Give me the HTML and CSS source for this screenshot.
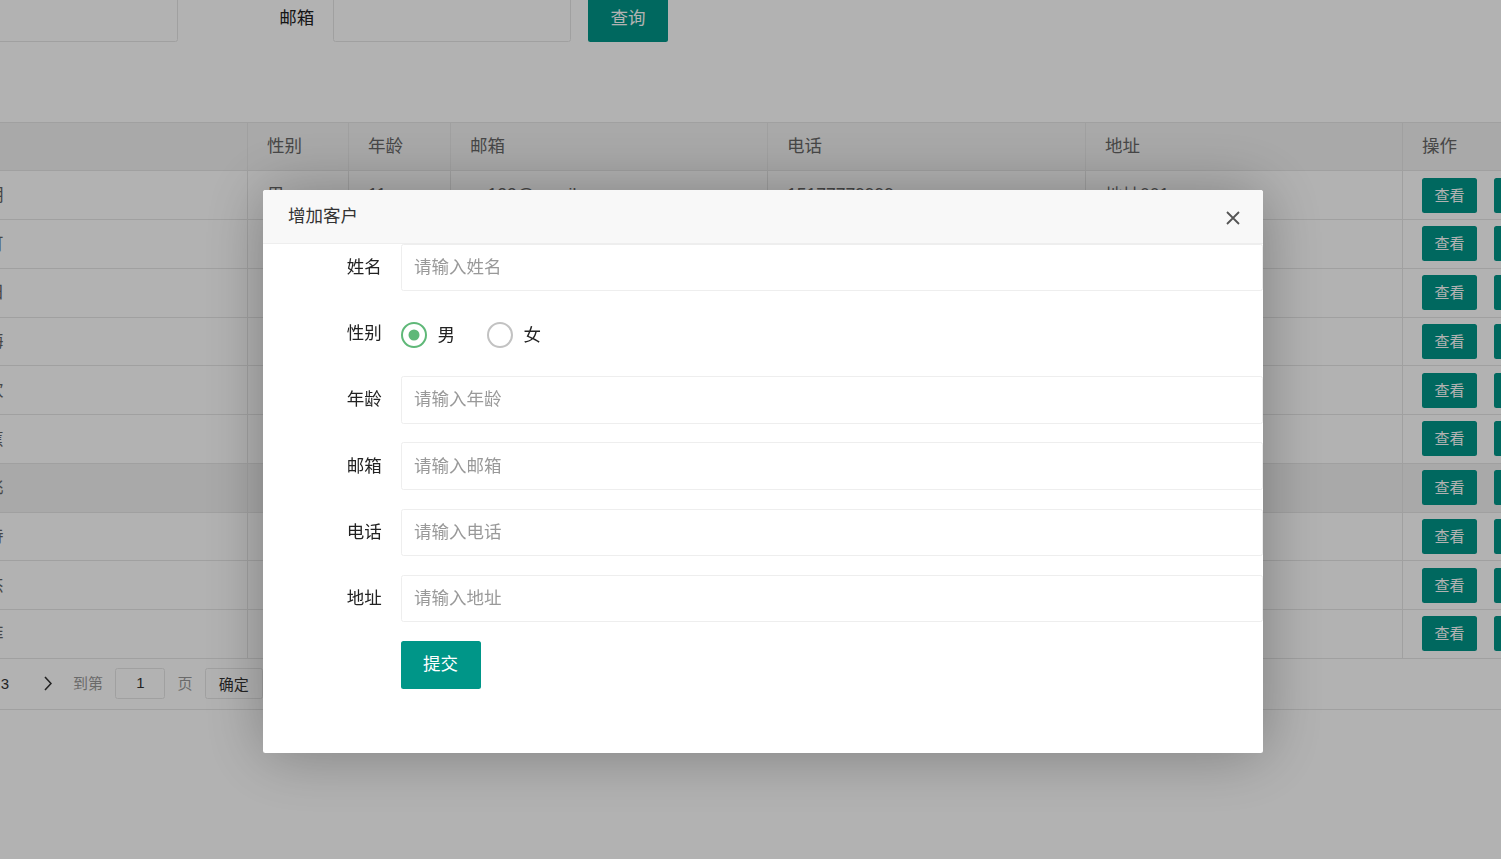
FILE: index.html
```html
<!DOCTYPE html>
<html lang="zh-CN">
<head>
  <meta charset="UTF-8">
  <meta name="viewport" content="width=device-width, initial-scale=1.0">
  <title>客户管理</title>
  <link rel="stylesheet" href="styles.css">
</head>
<body>
  <div class="page">
    <form class="search-bar">
      <label class="search-label">姓名</label>
      <input type="text" class="search-input">
      <label class="search-label">邮箱</label>
      <input type="text" class="search-input">
      <button type="button" class="btn">查询</button>
    </form>

    <div class="table-box">
      <table class="data-table">
        <colgroup>
          <col style="width: 128px">
          <col style="width: 316px">
          <col style="width: 101px">
          <col style="width: 102px">
          <col style="width: 317px">
          <col style="width: 318px">
          <col style="width: 317px">
          <col style="width: 200px">
        </colgroup>
        <thead>
          <tr>
            <th>ID</th>
            <th>姓名</th>
            <th>性别</th>
            <th>年龄</th>
            <th>邮箱</th>
            <th>电话</th>
            <th>地址</th>
            <th>操作</th>
          </tr>
        </thead>
        <tbody>
          <tr><td>1</td><td>李小明</td><td>男</td><td>11</td><td>zs123@email.com</td><td>15177779999</td><td>地址001</td><td><div class="ops"><a class="btn btn-sm">查看</a><a class="btn btn-sm">修改</a></div></td></tr>
          <tr><td>2</td><td>王可可</td><td>女</td><td>22</td><td>wk456@email.com</td><td>15177778888</td><td>地址002</td><td><div class="ops"><a class="btn btn-sm">查看</a><a class="btn btn-sm">修改</a></div></td></tr>
          <tr><td>3</td><td>张一旧</td><td>男</td><td>33</td><td>zj789@email.com</td><td>15177776666</td><td>地址003</td><td><div class="ops"><a class="btn btn-sm">查看</a><a class="btn btn-sm">修改</a></div></td></tr>
          <tr><td>4</td><td>赵雪梅</td><td>女</td><td>24</td><td>zm321@email.com</td><td>15177775555</td><td>地址004</td><td><div class="ops"><a class="btn btn-sm">查看</a><a class="btn btn-sm">修改</a></div></td></tr>
          <tr><td>5</td><td>刘小欢</td><td>男</td><td>35</td><td>lh654@email.com</td><td>15177774444</td><td>地址005</td><td><div class="ops"><a class="btn btn-sm">查看</a><a class="btn btn-sm">修改</a></div></td></tr>
          <tr><td>6</td><td>陈美蕉</td><td>女</td><td>26</td><td>cj987@email.com</td><td>15177773333</td><td>地址006</td><td><div class="ops"><a class="btn btn-sm">查看</a><a class="btn btn-sm">修改</a></div></td></tr>
          <tr class="hover"><td>7</td><td>杨一飞</td><td>男</td><td>37</td><td>yf111@email.com</td><td>15177772222</td><td>地址007</td><td><div class="ops"><a class="btn btn-sm">查看</a><a class="btn btn-sm">修改</a></div></td></tr>
          <tr><td>8</td><td>黄诗诗</td><td>女</td><td>28</td><td>hs222@email.com</td><td>15177771111</td><td>地址008</td><td><div class="ops"><a class="btn btn-sm">查看</a><a class="btn btn-sm">修改</a></div></td></tr>
          <tr><td>9</td><td>周小杰</td><td>男</td><td>39</td><td>zj333@email.com</td><td>15177770000</td><td>地址009</td><td><div class="ops"><a class="btn btn-sm">查看</a><a class="btn btn-sm">修改</a></div></td></tr>
          <tr><td>10</td><td>吴菲菲</td><td>女</td><td>20</td><td>wf444@email.com</td><td>15177779090</td><td>地址010</td><td><div class="ops"><a class="btn btn-sm">查看</a><a class="btn btn-sm">修改</a></div></td></tr>
        </tbody>
      </table>

      <div class="pager">
        <span class="pg-item">
          <svg width="8" height="15" viewBox="0 0 8 15"><polyline points="7,1 1,7.5 7,14" fill="none" stroke="#333" stroke-width="1.6"/></svg>
        </span>
        <span class="pg-item">1</span>
        <span class="pg-item">2</span>
        <span class="pg-item">3</span>
        <span class="pg-next">
          <svg width="8" height="15" viewBox="0 0 8 15"><polyline points="1,1 7,7.5 1,14" fill="none" stroke="#333" stroke-width="1.6"/></svg>
        </span>
        <span class="pg-text">到第</span>
        <input type="text" class="pg-input" value="1">
        <span class="pg-text pg-unit">页</span>
        <button type="button" class="pg-btn">确定</button>
      </div>
    </div>
  </div>

  <div class="shade"></div>

  <div class="layer">
    <div class="layer-title">
      增加客户
      <svg class="layer-close" width="14" height="14" viewBox="0 0 14 14">
        <path d="M1 1 L13 13 M13 1 L1 13" stroke="#555" stroke-width="1.8"/>
      </svg>
    </div>
    <form class="layer-form">
      <div class="form-item">
        <label class="form-label">姓名</label>
        <div class="form-block"><input type="text" class="form-input" placeholder="请输入姓名"></div>
      </div>
      <div class="form-item">
        <label class="form-label">性别</label>
        <div class="form-block">
          <div class="radio-group">
            <span class="radio">
              <svg width="26" height="26" viewBox="0 0 26 26"><circle cx="13" cy="13" r="12" fill="none" stroke="#5fb878" stroke-width="2"/><circle cx="13" cy="13" r="5.5" fill="#5fb878"/></svg>
              男
            </span>
            <span class="radio">
              <svg width="26" height="26" viewBox="0 0 26 26"><circle cx="13" cy="13" r="12" fill="none" stroke="#c2c2c2" stroke-width="2"/></svg>
              女
            </span>
          </div>
        </div>
      </div>
      <div class="form-item">
        <label class="form-label">年龄</label>
        <div class="form-block"><input type="text" class="form-input" placeholder="请输入年龄"></div>
      </div>
      <div class="form-item">
        <label class="form-label">邮箱</label>
        <div class="form-block"><input type="text" class="form-input" placeholder="请输入邮箱"></div>
      </div>
      <div class="form-item">
        <label class="form-label">电话</label>
        <div class="form-block"><input type="text" class="form-input" placeholder="请输入电话"></div>
      </div>
      <div class="form-item">
        <label class="form-label">地址</label>
        <div class="form-block"><input type="text" class="form-input" placeholder="请输入地址"></div>
      </div>
      <div class="form-item">
        <div class="form-block form-offset"><button type="button" class="btn">提交</button></div>
      </div>
    </form>
  </div>
</body>
</html>
```

FILE: styles.css
```css
* {
  box-sizing: border-box;
}

body {
  margin: 0;
  overflow: hidden;
  background: #fff;
  color: #333;
  font: 17.5px/1.4 "Liberation Sans", "Noto Sans CJK SC", sans-serif;
}

/* page behind the shade, scrolled a little right and down */
.page {
  width: 1900px;
  margin: -5.5px 0 0 -197px;
}

.search-bar {
  display: flex;
  align-items: center;
  height: 47.5px;
}

.search-label {
  width: 137.5px;
  padding-right: 18.75px;
  text-align: right;
  color: #222;
}

.search-input {
  width: 237.5px;
  height: 47.5px;
  margin-right: 17.5px;
  border: 1px solid #e6e6e6;
  border-radius: 2.5px;
}

.btn {
  display: inline-block;
  height: 47.5px;
  padding: 0 22.5px;
  border: none;
  border-radius: 2.5px;
  background: #009688;
  color: #fff;
  font: inherit;
  line-height: 47.5px;
  white-space: nowrap;
}

.table-box {
  margin-top: 79.5px;
}

.data-table {
  width: 1799px;
  table-layout: fixed;
  border-collapse: collapse;
  color: #666;
}

.data-table th,
.data-table td {
  height: 48.75px;
  padding: 0 19px;
  border: 1px solid #e6e6e6;
  text-align: left;
  font-weight: normal;
  white-space: nowrap;
  overflow: hidden;
}

.data-table thead tr,
.data-table tr.hover {
  background: #f2f2f2;
}

.ops {
  display: flex;
  gap: 17px;
}

.btn-sm {
  height: 35px;
  padding: 0 12.5px;
  font-size: 15px;
  line-height: 35px;
}

/* pagination */
.pager {
  display: flex;
  align-items: flex-start;
  height: 51.25px;
  padding: 8.75px 0 0 35.6px;
  border-bottom: 1px solid #e6e6e6;
  font-size: 15px;
  line-height: 32.5px;
  color: #333;
}

.pg-item {
  display: flex;
  align-items: center;
  justify-content: center;
  width: 47.5px;
  height: 32.5px;
}

.pg-next {
  display: flex;
  align-items: center;
  height: 32.5px;
  padding: 0 15.4px;
}

.pg-text {
  margin-left: 5.6px;
  color: #999;
}

.pg-input {
  width: 50px;
  height: 31.5px;
  margin: 0 12px 0 12.5px;
  border: 1px solid #e6e6e6;
  border-radius: 2.5px;
  color: #333;
  font: inherit;
  text-align: center;
}

.pg-unit {
  margin: 0 12.5px 0 0;
}

.pg-btn {
  width: 57.5px;
  height: 31.5px;
  padding: 0;
  border: 1px solid #e6e6e6;
  border-radius: 2.5px;
  background: #fff;
  color: #333;
  font: inherit;
}

/* modal */
.shade {
  position: fixed;
  top: 0;
  right: 0;
  bottom: 0;
  left: 0;
  background: rgba(0, 0, 0, 0.3);
}

.layer {
  position: fixed;
  left: 263px;
  top: 190px;
  width: 1000px;
  height: 563px;
  border-radius: 2.5px;
  background: #fff;
  box-shadow: 1px 1px 62px rgba(0, 0, 0, 0.3);
}

.layer-title {
  position: relative;
  height: 53.5px;
  padding-left: 25px;
  border-bottom: 1px solid #eee;
  border-radius: 2.5px 2.5px 0 0;
  background: #f8f8f8;
  color: #333;
  line-height: 52.5px;
}

.layer-close {
  position: absolute;
  top: 21px;
  right: 23px;
}

.form-item {
  display: flex;
  margin-bottom: 18.75px;
}

.form-label {
  flex-shrink: 0;
  width: 137.5px;
  padding: 11.25px 18.75px;
  line-height: 25px;
  text-align: right;
  color: #222;
}

.form-block {
  flex: 1;
}

.form-offset {
  margin-left: 137.5px;
}

.form-input {
  display: block;
  width: 100%;
  height: 47.5px;
  padding-left: 12.5px;
  border: 1px solid #eee;
  border-radius: 2.5px;
  color: #333;
  font: inherit;
  outline: none;
}

.form-input::placeholder {
  color: #999;
}

.radio-group {
  display: flex;
  align-items: center;
  height: 35px;
  margin-top: 7.5px;
}

.radio {
  display: flex;
  align-items: center;
  gap: 11px;
  margin-right: 31.5px;
  color: #222;
}
```
